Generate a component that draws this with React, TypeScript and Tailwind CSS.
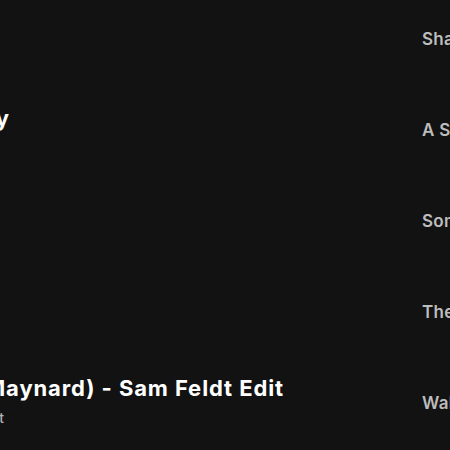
const songs = [
  "Shape of You",
  "A Sky Full of Stars",
  "Someone You Loved",
  "The Nights",
  "Wake Me Up",
];

export default function App() {
  return (
    <div
      className="w-[450px] h-[450px] overflow-hidden bg-[#121212] flex"
      style={{ fontFamily: "Inter, 'Liberation Sans', sans-serif" }}
    >
      {/* left column: titles, cut off by the left edge */}
      <div className="w-[422px] shrink-0 flex flex-col">
        <div className="h-[104px]" />
        <div className="w-[10px] flex justify-end">
          <span className="whitespace-nowrap text-[22px] leading-[28px] font-bold text-white tracking-[0.9px]">
            Blinding Lights of the City
          </span>
        </div>
        <div className="h-[242px]" />
        <div className="w-[284px] flex justify-end">
          <span className="whitespace-nowrap text-[22px] leading-[28px] font-bold text-white tracking-[0.9px]">
            Heartbreak Anthem (feat. Jack Maynard) - Sam Feldt Edit
          </span>
        </div>
        <div className="w-[4px] flex justify-end mt-[6px]">
          <span className="whitespace-nowrap text-[14px] leading-[20px] font-medium text-[#b3b3b3]">
            Galantis, David Guetta, Little Mix, Sam Feldt
          </span>
        </div>
      </div>

      {/* right column: list of songs */}
      <div className="flex flex-col pt-[28px] gap-[68px] min-w-0">
        {songs.map((s) => (
          <div
            key={s}
            className="whitespace-nowrap text-[17px] leading-[23px] font-semibold text-[#bdbdbd] tracking-[0.3px]"
          >
            {s}
          </div>
        ))}
      </div>
    </div>
  );
}
